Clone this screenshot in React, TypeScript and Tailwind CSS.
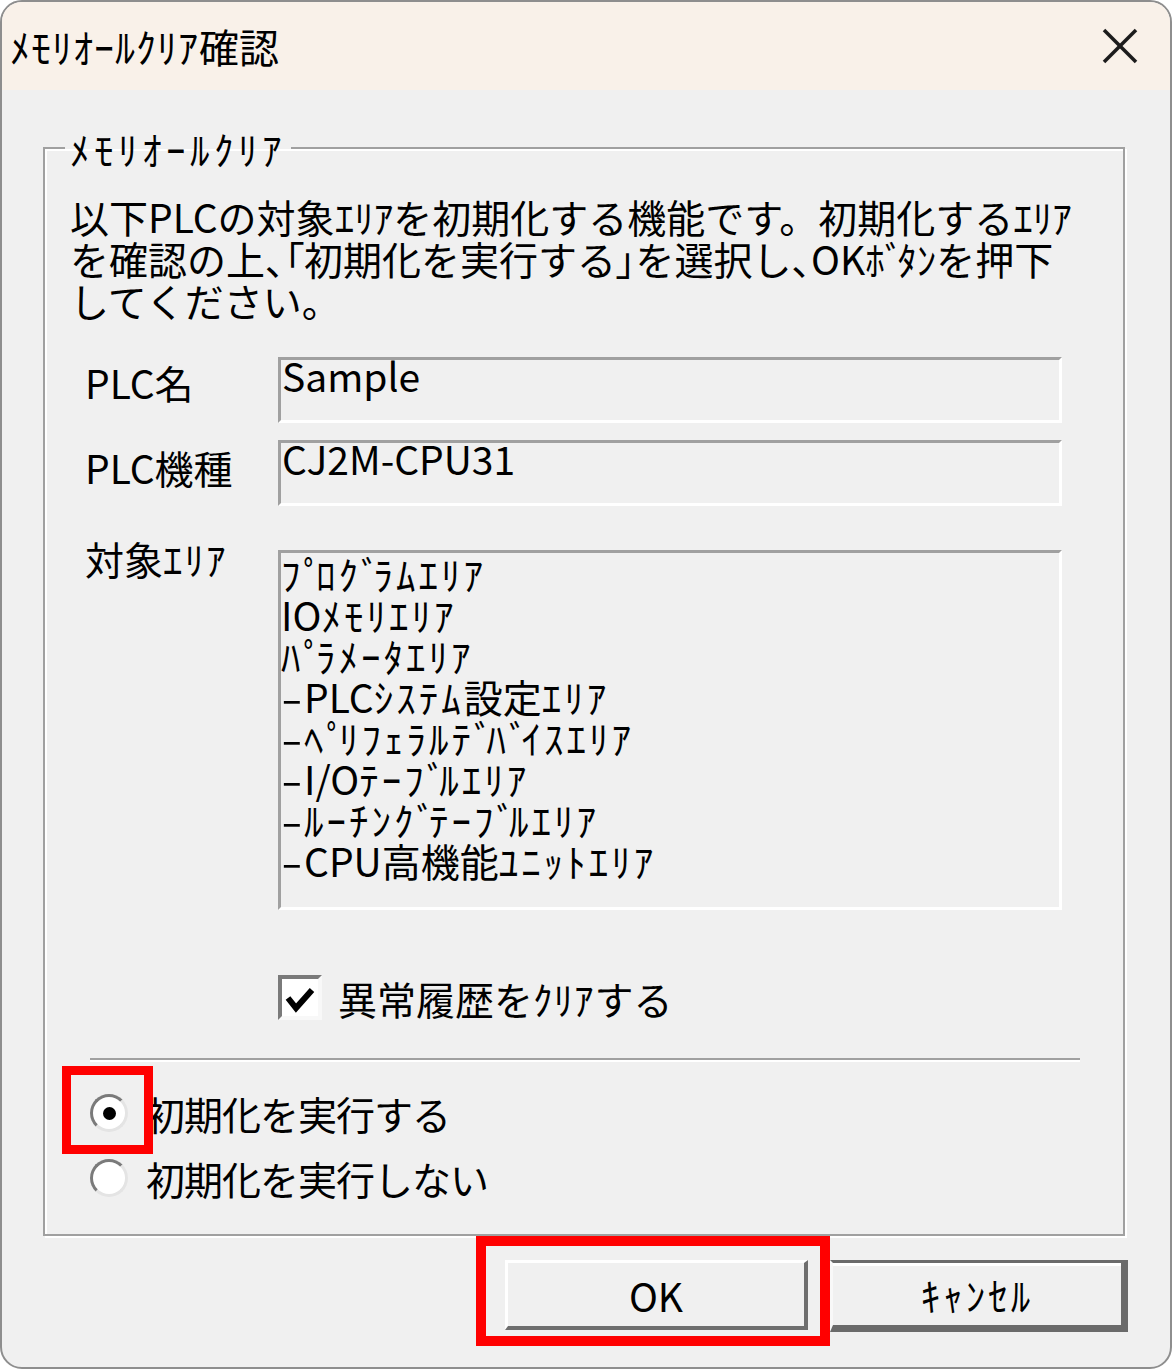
import React from "react";

const areaItems = [
  "ﾌﾟﾛｸﾞﾗﾑｴﾘｱ",
  "IOﾒﾓﾘｴﾘｱ",
  "ﾊﾟﾗﾒｰﾀｴﾘｱ",
  "-PLCｼｽﾃﾑ設定ｴﾘｱ",
  "-ﾍﾟﾘﾌｪﾗﾙﾃﾞﾊﾞｲｽｴﾘｱ",
  "-I/Oﾃｰﾌﾞﾙｴﾘｱ",
  "-ﾙｰﾁﾝｸﾞﾃｰﾌﾞﾙｴﾘｱ",
  "-CPU高機能ﾕﾆｯﾄｴﾘｱ",
];

// sunken read-only edit box (classic windows look)
const boxClass =
  "w-[784px] border-[3px] border-t-[#a0a0a0] border-l-[#a0a0a0] border-r-white border-b-white bg-[#f0f0f0]";

const Txt = ({ s, kana = "tracking-[2px]" }: { s: string; kana?: string }) => {
  const parts = s.split(/([\uFF61-\uFF9D]+|[\uFF9E\uFF9F]|[、「」]|-)/).filter((p) => p !== "");
  return (
    <>
      {parts.map((p, i) => {
        if (/^[\uFF9E\uFF9F]$/.test(p))
          return (
            <span key={i} className="tracking-[-7px]">
              {p}
            </span>
          );
        if (/^[\uFF61-\uFF9D]+$/.test(p))
          return (
            <span key={i} className={kana}>
              {p}
            </span>
          );
        if (/^[、「」]$/.test(p))
          return (
            <span key={i} className="[font-feature-settings:'palt']">
              {p}
            </span>
          );
        if (p === "-")
          return (
            <span key={i} className="inline-block w-[23px] scale-x-[1.6] origin-left">
              {p}
            </span>
          );
        return <React.Fragment key={i}>{p}</React.Fragment>;
      })}
    </>
  );
};

const App = () => {
  return (
    <div className="w-[1172px] h-[1369px] overflow-hidden rounded-[22px] border-2 border-[#8e8e8e] bg-[#f0f0f0] text-black font-['Noto_Sans_CJK_JP','Noto_Sans_CJK_SC',sans-serif] text-[39px] leading-[42px] flex flex-col">
      {/* title bar */}
      <div className="h-[88px] bg-[#f9f1e9] flex items-center justify-between pl-[8px] pr-[32px] shrink-0">
        <span className="text-[40px]">
          <Txt s="ﾒﾓﾘｵｰﾙｸﾘｱ確認" kana="tracking-[1px]" />
        </span>
        <svg width="36" height="36" viewBox="0 0 36 36">
          <line x1="2" y1="2" x2="34" y2="34" stroke="#1c1c1c" strokeWidth="3.5" />
          <line x1="34" y1="2" x2="2" y2="34" stroke="#1c1c1c" strokeWidth="3.5" />
        </svg>
      </div>

      <div className="flex-1 pt-[37px] pl-[41px]">
        <fieldset className="w-[1082px] border-2 border-[#a0a0a0] shadow-[inset_2px_2px_0_#ffffff,2px_2px_0_#ffffff] pb-[35px]">
          <legend className="ml-[20px] px-[5px] leading-[42px] tracking-[4.5px]">ﾒﾓﾘｵｰﾙｸﾘｱ</legend>

          <p className="mt-[26px] pl-[25px] whitespace-nowrap">
            <Txt s="以下PLCの対象ｴﾘｱを初期化する機能です。初期化するｴﾘｱ" kana="tracking-[0px]" />
            <br />
            <Txt s="を確認の上、「初期化を実行する」を選択し、OKﾎﾞﾀﾝを押下" kana="tracking-[0px]" />
            <br />
            してください。
          </p>

          <div className="mt-[36px] flex items-start pl-[40px]">
            <span className="w-[193px] mt-[4px]">PLC名</span>
            <div className={`${boxClass} h-[66px]`}>
              <div className="leading-[30px] pl-[1px]">Sample</div>
            </div>
          </div>

          <div className="mt-[17px] flex items-start pl-[40px]">
            <span className="w-[193px] mt-[6px]">PLC機種</span>
            <div className={`${boxClass} h-[66px]`}>
              <div className="leading-[30px] pl-[1px]">CJ2M-CPU31</div>
            </div>
          </div>

          <div className="mt-[32px] flex items-start pl-[40px]">
            <span className="w-[193px] leading-[41px]">
              <Txt s="対象ｴﾘｱ" />
            </span>
            <div className={`${boxClass} h-[360px] mt-[12px]`}>
              {areaItems.map((item, idx) => (
                <div key={idx} className="leading-[41px] whitespace-nowrap">
                  <Txt s={item} kana="tracking-[3px]" />
                </div>
              ))}
            </div>
          </div>

          <div className="mt-[65px] ml-[233px] flex items-center gap-[16px]">
            <div className="w-[44px] h-[45px] border-4 border-t-[#7a7a7a] border-l-[#7a7a7a] border-r-[#f8f8f8] border-b-[#f8f8f8] bg-white">
              <svg width="36" height="37" viewBox="0 0 36 37">
                <polyline
                  points="6,19 14,29 30,11"
                  fill="none"
                  stroke="#000"
                  strokeWidth="6"
                />
              </svg>
            </div>
            <span>
              <Txt s="異常履歴をｸﾘｱする" kana="tracking-[1px]" />
            </span>
          </div>

          <div className="mt-[38px] ml-[45px] w-[990px] border-t-2 border-b-2 border-t-[#a0a0a0] border-b-white" />

          <div className="mt-[30px] ml-[45px] h-[42px] flex items-center gap-[18px]">
            <div className="relative">
              <div className="w-[38px] h-[38px] rounded-full border-[3px] border-t-[#7a7a7a] border-l-[#7a7a7a] border-r-[#e4e4e4] border-b-[#e4e4e4] bg-white flex items-center justify-center">
                <div className="w-[13px] h-[13px] rounded-full bg-black" />
              </div>
              <div className="absolute left-[-28px] top-[-28px] w-[91px] h-[88px] border-[9px] border-[#ff0000]" />
            </div>
            <span className="tracking-[-1px]">初期化を実行する</span>
          </div>

          <div className="mt-[23px] ml-[45px] h-[42px] flex items-center gap-[18px]">
            <div className="w-[38px] h-[38px] rounded-full border-[3px] border-t-[#7a7a7a] border-l-[#7a7a7a] border-r-[#e4e4e4] border-b-[#e4e4e4] bg-white" />
            <span className="tracking-[-1px]">初期化を実行しない</span>
          </div>
        </fieldset>

        <div className="mt-[24px] pr-[42px] flex justify-end gap-[22px]">
          <div className="relative">
            <div className="w-[303px] h-[70px] border-t-[3px] border-l-[3px] border-r-4 border-b-4 border-t-white border-l-white border-r-[#6e6e6e] border-b-[#6e6e6e] bg-[#f0f0f0] flex items-center justify-center">
              OK
            </div>
            <div className="absolute left-[-29px] top-[-24px] w-[354px] h-[110px] border-[10px] border-[#ff0000]" />
          </div>
          <div className="w-[298px] h-[72px] border-t-[3px] border-l-[3px] border-r-[7px] border-b-[7px] border-t-[#6a6a6a] border-l-[#f8f8f8] border-r-[#6a6a6a] border-b-[#6a6a6a] shadow-[inset_0_3px_0_#ffffff] bg-[#f0f0f0] flex items-center justify-center">
            <Txt s="ｷｬﾝｾﾙ" kana="tracking-[3px]" />
          </div>
        </div>
      </div>
    </div>
  );
};

export default App;
